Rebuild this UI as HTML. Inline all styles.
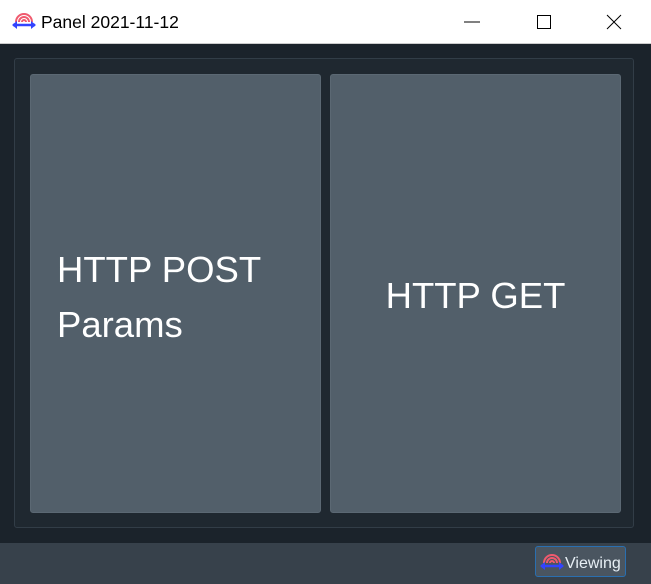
<!DOCTYPE html>
<html><head><style>
body{margin:0;width:651px;height:584px;background:#1b232b;font-family:"Liberation Sans",sans-serif;position:relative;overflow:hidden}
.tb{position:absolute;left:0;top:0;width:651px;height:44px;background:#fff;border-bottom:1px solid #ccc;box-sizing:border-box}
.tt{position:absolute;left:41px;top:12px;font-size:17.5px;color:#000}
.frame{position:absolute;left:14px;top:58px;width:620px;height:470px;border:1px solid #323d47;border-radius:3px;box-sizing:border-box;background:#1f2830}
.p{position:absolute;top:74px;height:439px;background:#525f6a;border:1px solid #5b6873;border-radius:3px;box-sizing:border-box;color:#fff;font-size:36.5px}
.bar{position:absolute;left:0;top:543px;width:651px;height:41px;background:#37414b}
.btn{position:absolute;left:535px;top:546px;width:91px;height:31px;border:1px solid #2a6fb0;border-radius:3px;box-sizing:border-box;background:#4a5560;color:#e6eef4;font-size:16px}
</style></head><body>
<div class="tb">
<svg style="position:absolute;left:11px;top:10px" width="26" height="22" viewBox="0 0 26 22">
<g fill="none" stroke="#f05a6e" stroke-width="2"><path d="M5 12a8 8 0 0 1 16 0"/><path d="M8 12a5 5 0 0 1 10 0"/><path d="M11 12a2 2 0 0 1 4 0"/></g>
<path d="M2 15h22" stroke="#3344ff" stroke-width="2.5"/><path d="M1 15l5-4v8zM25 15l-5-4v8z" fill="#3344ff"/></svg>
<div class="tt">Panel 2021-11-12</div>
<svg style="position:absolute;left:460px;top:12px" width="170" height="20"><path d="M4 10h16" stroke="#000"/><path d="M77.5 3.5h13v13h-13z" fill="none" stroke="#000"/><path d="M147 3l14 14M161 3l-14 14" stroke="#000"/></svg>
</div>
<div class="frame"></div>
<div class="p" style="left:30px;width:291px"><div style="position:absolute;left:26px;top:167px;line-height:55px">HTTP POST<br>Params</div></div>
<div class="p" style="left:330px;width:291px"><div style="position:absolute;left:0;width:100%;text-align:center;top:199px;line-height:44px">HTTP GET</div></div>
<div class="bar"></div>
<div class="btn">
<svg style="position:absolute;left:3px;top:3px" width="26" height="24" viewBox="0 0 26 22">
<g fill="none" stroke="#f05a6e" stroke-width="2"><path d="M5 12a8 8 0 0 1 16 0"/><path d="M8 12a5 5 0 0 1 10 0"/><path d="M11 12a2 2 0 0 1 4 0"/></g>
<path d="M2 15h22" stroke="#3344ff" stroke-width="2.5"/><path d="M1 15l5-4v8zM25 15l-5-4v8z" fill="#3344ff"/></svg>
<span style="position:absolute;left:29px;top:8px">Viewing</span></div>
</body></html>
